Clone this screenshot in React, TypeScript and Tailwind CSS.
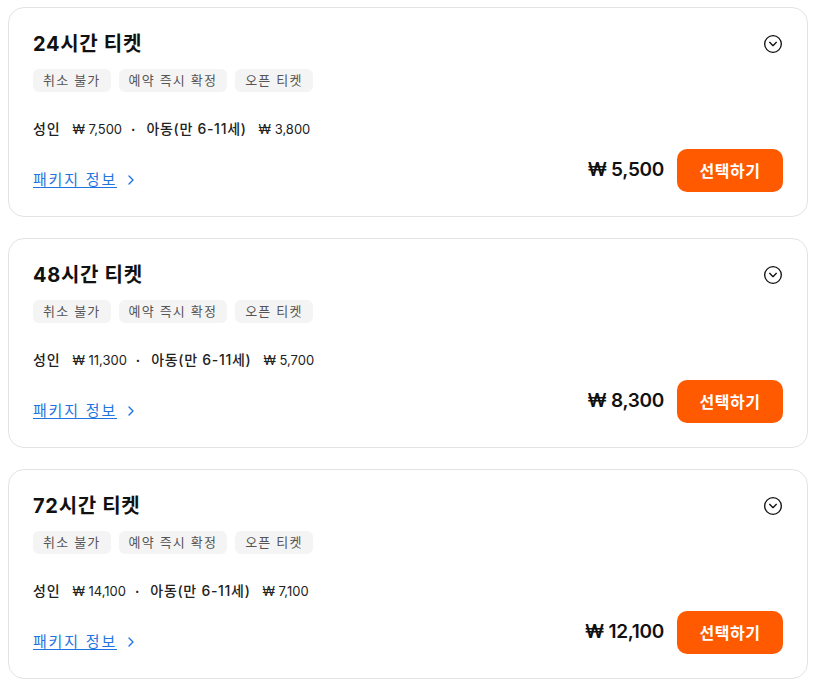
import { ChevronRight, CircleChevronDown } from "lucide-react";

const TICKETS = [
  { title: "24시간 티켓", adult: "7,500", child: "3,800", price: "5,500" },
  { title: "48시간 티켓", adult: "11,300", child: "5,700", price: "8,300" },
  { title: "72시간 티켓", adult: "14,100", child: "7,100", price: "12,100" },
];

const TAGS = ["취소 불가", "예약 즉시 확정", "오픈 티켓"];

function TicketCard({ t }: { t: (typeof TICKETS)[number] }) {
  return (
    <div className="rounded-2xl border border-[#e3e3e3] bg-white px-6 pt-[22px] pb-6">
      {/* Header */}
      <div className="flex items-center justify-between">
        <h3 className="text-[20px] font-bold leading-7 tracking-[0.7px] text-[#111]">{t.title}</h3>
        <CircleChevronDown className="h-5 w-5 text-[#111]" strokeWidth={1.6} />
      </div>

      {/* Tags */}
      <div className="mt-[11px] flex gap-2">
        {TAGS.map((tag) => (
          <span
            key={tag}
            className="rounded-md bg-[#f4f4f5] px-[10px] py-[2px] text-[13px] leading-[19px] tracking-[1.2px] text-[#555]"
          >
            {tag}
          </span>
        ))}
      </div>

      {/* Price detail */}
      <div className="mt-[27px] flex items-center text-[13px] leading-5 text-[#222]">
        <span className="text-[14px] font-medium tracking-[0.8px]">성인</span>
        <span className="ml-3">₩ {t.adult}</span>
        <span className="ml-[9px] mr-[11px] font-bold">·</span>
        <span className="text-[14px] font-medium tracking-[0.7px]">아동(만 6-11세)</span>
        <span className="ml-3">₩ {t.child}</span>
      </div>

      {/* Bottom row */}
      <div className="mt-[10px] flex items-end justify-between">
        <a
          href="#"
          className="flex items-center gap-[6px] pb-[1px] text-[15px] leading-[22px] text-[#1f74e0]"
        >
          <span className="underline underline-offset-2 tracking-[1.8px]">패키지 정보</span>
          <ChevronRight className="h-4 w-4" strokeWidth={2} />
        </a>
        <div className="flex items-center gap-[13px]">
          <span className="text-[19px] font-semibold tracking-[-0.3px] text-[#111]">₩ {t.price}</span>
          <button className="h-[43px] w-[106px] rounded-[10px] bg-[#ff5a00] text-[16px] font-bold tracking-[0.5px] text-white">
            선택하기
          </button>
        </div>
      </div>
    </div>
  );
}

export default function App() {
  return (
    <div
      className="flex min-h-screen flex-col gap-[21px] bg-white pl-2 pr-[7px] pt-[7px]"
      style={{ fontFamily: '"Inter", "Noto Sans CJK KR", sans-serif' }}
    >
      {TICKETS.map((t) => (
        <TicketCard key={t.title} t={t} />
      ))}
    </div>
  );
}
